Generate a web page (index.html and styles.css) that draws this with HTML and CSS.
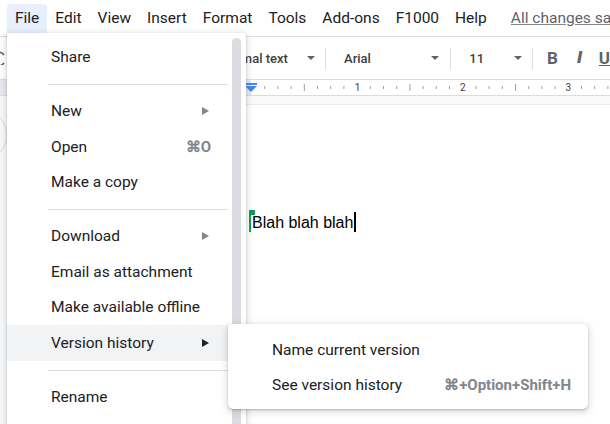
FILE: index.html
```html
<!DOCTYPE html>
<html lang="en">
<head>
<meta charset="utf-8">
<title>Docs - File menu</title>
<link rel="stylesheet" href="styles.css">
</head>
<body>
<div class="app">
  <header class="menubar">
    <span class="mb-item is-open">File</span>
    <span class="mb-item">Edit</span>
    <span class="mb-item">View</span>
    <span class="mb-item">Insert</span>
    <span class="mb-item">Format</span>
    <span class="mb-item">Tools</span>
    <span class="mb-item">Add-ons</span>
    <span class="mb-item">F1000</span>
    <span class="mb-item">Help</span>
    <span class="saved">All changes saved in Drive</span>
  </header>

  <div class="toolbar">
    <div class="tb-lead">
      <svg class="undo" width="14" height="14" viewBox="0 0 14 14"><path d="M12 4 A7 7 0 1 0 12 12" fill="none" stroke="#5f6368" stroke-width="1.6"/></svg>
    </div>
    <div class="tb-drop tb-style"><span>Normal text</span><i class="caret"></i></div>
    <div class="tb-sep"></div>
    <div class="tb-drop tb-font"><span>Arial</span><i class="caret"></i></div>
    <div class="tb-sep"></div>
    <div class="tb-drop tb-size"><span>11</span><i class="caret"></i></div>
    <div class="tb-sep"></div>
    <span class="tb-btn tb-bold">B</span>
    <span class="tb-btn tb-italic">I</span>
    <span class="tb-btn tb-under">U</span>
  </div>

  <div class="ruler">
    <svg class="ruler-svg" width="610" height="15" viewBox="0 0 610 15">
      <rect x="0" y="0" width="251" height="15" fill="#e8eaed"/>
      <g stroke="#9aa0a6" stroke-width="1">
        <line x1="264.7" y1="6" x2="264.7" y2="9"/>
        <line x1="277.9" y1="6" x2="277.9" y2="9"/>
        <line x1="291.1" y1="6" x2="291.1" y2="9"/>
        <line x1="304.3" y1="4" x2="304.3" y2="11"/>
        <line x1="317.5" y1="6" x2="317.5" y2="9"/>
        <line x1="330.7" y1="6" x2="330.7" y2="9"/>
        <line x1="343.9" y1="6" x2="343.9" y2="9"/>
        <line x1="370.3" y1="6" x2="370.3" y2="9"/>
        <line x1="383.5" y1="6" x2="383.5" y2="9"/>
        <line x1="396.7" y1="6" x2="396.7" y2="9"/>
        <line x1="409.9" y1="4" x2="409.9" y2="11"/>
        <line x1="423.1" y1="6" x2="423.1" y2="9"/>
        <line x1="436.3" y1="6" x2="436.3" y2="9"/>
        <line x1="449.5" y1="6" x2="449.5" y2="9"/>
        <line x1="475.9" y1="6" x2="475.9" y2="9"/>
        <line x1="489.1" y1="6" x2="489.1" y2="9"/>
        <line x1="502.3" y1="6" x2="502.3" y2="9"/>
        <line x1="515.5" y1="4" x2="515.5" y2="11"/>
        <line x1="528.7" y1="6" x2="528.7" y2="9"/>
        <line x1="541.9" y1="6" x2="541.9" y2="9"/>
        <line x1="555.1" y1="6" x2="555.1" y2="9"/>
        <line x1="581.5" y1="6" x2="581.5" y2="9"/>
        <line x1="594.7" y1="6" x2="594.7" y2="9"/>
        <line x1="607.9" y1="6" x2="607.9" y2="9"/>
      </g>
      <g class="ruler-num" font-family="Roboto, Arial, sans-serif" font-size="10" fill="#3c4043" text-anchor="middle">
        <text x="357.5" y="11">1</text>
        <text x="462.7" y="11">2</text>
        <text x="568.3" y="11">3</text>
      </g>
      <rect x="245" y="3" width="12" height="2" fill="#4285f4"/>
      <path d="M245 6 H257 L251 12 Z" fill="#4285f4"/>
    </svg>
  </div>

  <main class="canvas">
    <div class="side-ring"></div>
    <div class="page">
      <p class="doc-line"><span class="collab"></span>Blah blah blah<span class="cursor"></span></p>
    </div>
  </main>

  <nav class="menu">
    <div class="menu-list">
      <div class="mi"><span class="mi-label">Share</span></div>
      <div class="msep"></div>
      <div class="mi"><span class="mi-label">New</span><i class="arrow"></i></div>
      <div class="mi"><span class="mi-label">Open</span><span class="mi-key">⌘O</span></div>
      <div class="mi"><span class="mi-label">Make a copy</span></div>
      <div class="msep"></div>
      <div class="mi"><span class="mi-label">Download</span><i class="arrow"></i></div>
      <div class="mi"><span class="mi-label">Email as attachment</span></div>
      <div class="mi"><span class="mi-label">Make available offline</span></div>
      <div class="mi is-hover"><span class="mi-label">Version history</span><i class="arrow arrow-dark"></i></div>
      <div class="msep"></div>
      <div class="mi"><span class="mi-label">Rename</span></div>
    </div>
    <div class="menu-scroll"><div class="thumb"></div></div>
  </nav>

  <div class="submenu">
    <div class="smi"><span class="mi-label">Name current version</span></div>
    <div class="smi"><span class="mi-label">See version history</span><span class="mi-key">⌘+Option+Shift+H</span></div>
  </div>
</div>
</body>
</html>
```

FILE: styles.css
```css
* { box-sizing: border-box; }

html, body {
  margin: 0;
  padding: 0;
}

body {
  width: 610px;
  height: 424px;
  overflow: hidden;
  font-family: Roboto, "Noto Sans", Arial, sans-serif;
  color: #202124;
  background: #fff;
}

.app {
  position: relative;
  width: 610px;
  height: 424px;
  overflow: hidden;
  display: flex;
  flex-direction: column;
}

/* ---------- menubar ---------- */
.menubar {
  height: 37px;
  flex: 0 0 37px;
  display: flex;
  align-items: flex-start;
  padding: 4px 0 0 7px;
  border-bottom: 1px solid #dadce0;
  white-space: nowrap;
  overflow: hidden;
}

.mb-item {
  height: 29px;
  line-height: 29px;
  padding: 0 8px;
  font-size: 15.5px;
  color: #202124;
  border-radius: 4px 4px 0 0;
}

.mb-item.is-open {
  background: #e8f0fe;
}

.saved {
  margin-left: 16px;
  height: 29px;
  line-height: 29px;
  font-size: 15.5px;
  color: #5f6368;
  text-decoration: underline;
  text-decoration-color: #80868b;
}

/* ---------- toolbar ---------- */
.toolbar {
  height: 43px;
  flex: 0 0 43px;
  display: flex;
  align-items: center;
  border-bottom: 1px solid #dadce0;
  white-space: nowrap;
  font-size: 13px;
  font-weight: 500;
  color: #3c4043;
}

.tb-lead {
  width: 221px;
  display: flex;
  align-items: center;
}

.undo {
  margin-left: -8px;
}

.tb-drop {
  display: flex;
  align-items: center;
  height: 28px;
}

.tb-style { width: 106px; }
.tb-style .caret { margin-left: auto; margin-right: 10px; }

.tb-font { width: 125px; padding-left: 18px; }
.tb-font .caret { margin-left: auto; margin-right: 11px; }

.tb-size { width: 81px; padding-left: 18px; }
.tb-size .caret { margin-left: auto; margin-right: 10px; }

.caret {
  width: 0;
  height: 0;
  border-left: 4px solid transparent;
  border-right: 4px solid transparent;
  border-top: 4px solid #5f6368;
}

.tb-sep {
  width: 1px;
  height: 21px;
  background: #dadce0;
}

.tb-btn {
  font-size: 17px;
  color: #5f6368;
  line-height: 20px;
}

.tb-bold {
  font-weight: 700;
  margin-left: 14px;
}

.tb-italic {
  margin-left: 19px;
  font-family: "DejaVu Sans", sans-serif;
  font-style: italic;
  font-weight: 700;
  font-size: 16px;
}

.tb-under {
  margin-left: 16px;
  font-weight: 700;
  text-decoration: underline;
}

/* ---------- ruler ---------- */
.ruler {
  height: 16px;
  flex: 0 0 16px;
  border-bottom: 1px solid #dadce0;
  background: #fff;
}

.ruler-svg {
  display: block;
}

/* ---------- canvas ---------- */
.canvas {
  position: relative;
  flex: 1;
  background: #f8f9fa;
  padding: 9px 0 0 146px;
}

.side-ring {
  position: absolute;
  left: -49px;
  top: 11px;
  width: 56px;
  height: 56px;
  border-radius: 50%;
  border: 1px solid #dadce0;
}

.page {
  height: 100%;
  background: #fff;
  box-shadow: 0 0 0 1px #e8eaed;
  padding-top: 107px;
  padding-left: 106px;
}

.doc-line {
  margin: 0;
  position: relative;
  font-family: "Liberation Sans", Arial, sans-serif;
  font-size: 16px;
  line-height: 19px;
  color: #000;
  display: inline-block;
}

.collab {
  position: absolute;
  left: -3px;
  top: -2px;
  width: 2px;
  height: 22px;
  background: #0f9d58;
}

.collab::before {
  content: "";
  position: absolute;
  left: 0;
  top: 0;
  width: 6px;
  height: 5px;
  background: #0f9d58;
}

.cursor {
  display: inline-block;
  width: 2px;
  height: 20px;
  background: #000;
  vertical-align: -4px;
  margin-left: 1px;
}

/* ---------- file menu ---------- */
.menu {
  position: absolute;
  left: 7px;
  top: 33px;
  width: 239px;
  height: 400px;
  background: #fff;
  border-radius: 0 4px 0 0;
  box-shadow: 0 2px 6px 2px rgba(60, 64, 67, 0.15), 0 1px 2px rgba(60, 64, 67, 0.3);
  display: flex;
}

.menu-list {
  width: 221px;
  padding-top: 6.5px;
}

.mi {
  height: 35.5px;
  display: flex;
  align-items: center;
  padding: 0 19px 0 44px;
  font-size: 15.5px;
  color: #202124;
  white-space: nowrap;
}

.mi.is-hover {
  background: #f1f3f4;
}

.mi-label {
  flex: 1;
}

.mi-key {
  font-weight: 700;
  color: #80868b;
  font-size: 15px;
}

.mi .mi-key {
  margin-right: -2px;
}

.arrow {
  width: 0;
  height: 0;
  border-top: 4px solid transparent;
  border-bottom: 4px solid transparent;
  border-left: 7px solid #80868b;
}

.arrow-dark {
  border-left-color: #202124;
}

.msep {
  height: 1px;
  background: #dadce0;
  margin: 9px 0 8.5px 41px;
}

.menu-scroll {
  width: 18px;
  padding: 5px 5px 0 4px;
}

.thumb {
  height: 100%;
  background: #dadce0;
  border-radius: 5px 5px 0 0;
}

/* ---------- submenu ---------- */
.submenu {
  position: absolute;
  left: 228px;
  top: 324px;
  width: 360px;
  padding: 8px 0 7px;
  background: #fff;
  border-radius: 5px;
  box-shadow: 0 2px 6px 2px rgba(60, 64, 67, 0.15), 0 1px 2px rgba(60, 64, 67, 0.3);
}

.smi {
  height: 35px;
  display: flex;
  align-items: center;
  padding: 0 17px 0 44px;
  font-size: 15.5px;
  color: #202124;
  white-space: nowrap;
}
```
